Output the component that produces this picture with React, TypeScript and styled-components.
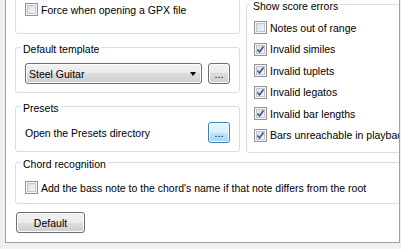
import React from 'react';
import styled, { createGlobalStyle } from 'styled-components';

const GlobalStyle = createGlobalStyle`
    body {
        margin: 0;
        background: #f0f0f0;
        font-family: "Liberation Sans", Arial, sans-serif;
        font-size: 10.5px;
        color: #000;
    }
`

type CheckProps = {
    label: string
    checked?: boolean
}

const CheckRow = (props: CheckProps) => {
    return (
        <Row>
            <Box>
                {props.checked && (
                    <svg width="13" height="13" viewBox="0 0 13 13">
                        <path d="M3.5 6.5 L5.5 9 L9.5 3.5" fill="none" stroke="#3f5192" strokeWidth="1.6" strokeLinejoin="round" />
                    </svg>
                )}
            </Box>
            <Label>{props.label}</Label>
        </Row>
    );
};

const scoreErrors = [
    { label: 'Notes out of range', checked: false },
    { label: 'Invalid similes', checked: true },
    { label: 'Invalid tuplets', checked: true },
    { label: 'Invalid legatos', checked: true },
    { label: 'Invalid bar lengths', checked: true },
    { label: 'Bars unreachable in playback', checked: true },
];

export default function App() {
    return (
        <>
            <GlobalStyle />
            <Frame>
                <Scroller>
                    <Columns>
                        <LeftColumn>
                            <ImportGroup>
                                <CheckRow label="Force when opening a GPX file" />
                            </ImportGroup>
                            <Group>
                                <Legend>Default template</Legend>
                                <FieldRow>
                                    <Combo>
                                        <span>Steel Guitar</span>
                                        <Arrow />
                                    </Combo>
                                    <DotsButton>...</DotsButton>
                                </FieldRow>
                            </Group>
                            <Group>
                                <Legend>Presets</Legend>
                                <FieldRow>
                                    <Label>Open the Presets directory</Label>
                                    <DotsButton $hot>...</DotsButton>
                                </FieldRow>
                            </Group>
                        </LeftColumn>
                        <RightColumn>
                            <ScoreGroup>
                                <Legend>Show score errors</Legend>
                                <CheckList>
                                    {scoreErrors.map((item) => (
                                        <CheckRow key={item.label} label={item.label} checked={item.checked} />
                                    ))}
                                </CheckList>
                            </ScoreGroup>
                        </RightColumn>
                        <ChordGroup>
                            <Legend>Chord recognition</Legend>
                            <CheckRow label="Add the bass note to the chord's name if that note differs from the root" />
                        </ChordGroup>
                    </Columns>
                    <DefaultButton>Default</DefaultButton>
                </Scroller>
            </Frame>
        </>
    );
}

const Frame = styled.div`
    margin-left: 5px;
    width: 395px;
    height: 243px;
    box-sizing: border-box;
    background: #fff;
    border: 1px solid #a0a0a0;
    border-top: none;
    overflow: hidden;
`

const Scroller = styled.div`
    margin-top: -10px;
    padding-left: 9px;
    width: 480px;
`

const Columns = styled.div`
    display: grid;
    grid-template-columns: 225px 225px;
    column-gap: 6px;
    row-gap: 1px;
    align-items: start;
`

const LeftColumn = styled.div`
    display: flex;
    flex-direction: column;
    gap: 5px;
`

const RightColumn = styled.div`
    margin-top: 6px;
`

const Group = styled.fieldset`
    margin: 0;
    min-width: 0;
    padding: 8px 9px 8px 9px;
    border: 1px solid #d5dfe5;
    border-radius: 3px;
`

const ImportGroup = styled(Group)`
    padding-top: 12px;
    padding-bottom: 17px;
`

const ScoreGroup = styled(Group)`
    padding: 9px 7px 10.5px 7px;
`

const ChordGroup = styled(Group)`
    grid-column: 1 / -1;
    padding-top: 11px;
    padding-bottom: 9px;
`

const Legend = styled.legend`
    margin-left: -4px;
    padding: 4px 2px 0;
    line-height: 12px;

    ${ScoreGroup} > & {
        margin-left: -3px;
    }
`

const Row = styled.div`
    display: flex;
    align-items: center;
    gap: 3px;
    height: 13px;
    white-space: nowrap;
`

const CheckList = styled.div`
    display: flex;
    flex-direction: column;
    gap: 8.5px;
`

const Box = styled.span`
    flex: none;
    width: 13px;
    height: 13px;
    box-sizing: border-box;
    border: 1px solid #939393;
    background: linear-gradient(135deg, #d9dbdd 10%, #f8f8f8 90%);
    box-shadow: inset 0 0 0 1px #f6f6f6, inset 0 0 0 2px #c3c6ca;
    position: relative;

    svg {
        position: absolute;
        left: -1px;
        top: -1px;
    }
`

const Label = styled.span`
    line-height: 12px;
    white-space: nowrap;
`

const FieldRow = styled.div`
    display: flex;
    align-items: center;
    justify-content: space-between;
    gap: 6px;
    height: 21px;
`

const buttonFace = `
    box-sizing: border-box;
    height: 21px;
    border: 1px solid #707070;
    border-radius: 3px;
    background: linear-gradient(#f2f2f2 0%, #ebebeb 50%, #dddddd 50%, #cfcfcf 100%);
    box-shadow: inset 0 0 0 1px #fcfcfc;
    font: inherit;
    color: #000;
`

const Combo = styled.div`
    ${buttonFace}
    flex: 1;
    display: flex;
    align-items: center;
    justify-content: space-between;
    padding: 0 5px 0 3px;
`

const Arrow = styled.span`
    width: 0;
    height: 0;
    border-left: 3.5px solid transparent;
    border-right: 3.5px solid transparent;
    border-top: 4px solid #000;
`

const DotsButton = styled.button<{ $hot?: boolean }>`
    ${buttonFace}
    flex: none;
    width: 22px;
    padding: 0;
    line-height: 12px;
    ${(p) => p.$hot && `
        border-color: #3c7fb1;
        background: linear-gradient(#eaf6fd 0%, #d9f0fc 50%, #bee6fd 50%, #a7d9f5 100%);
    `}
`

const DefaultButton = styled.button`
    ${buttonFace}
    display: block;
    margin: 8px 0 0 1px;
    width: 69px;
    padding: 0;
`
